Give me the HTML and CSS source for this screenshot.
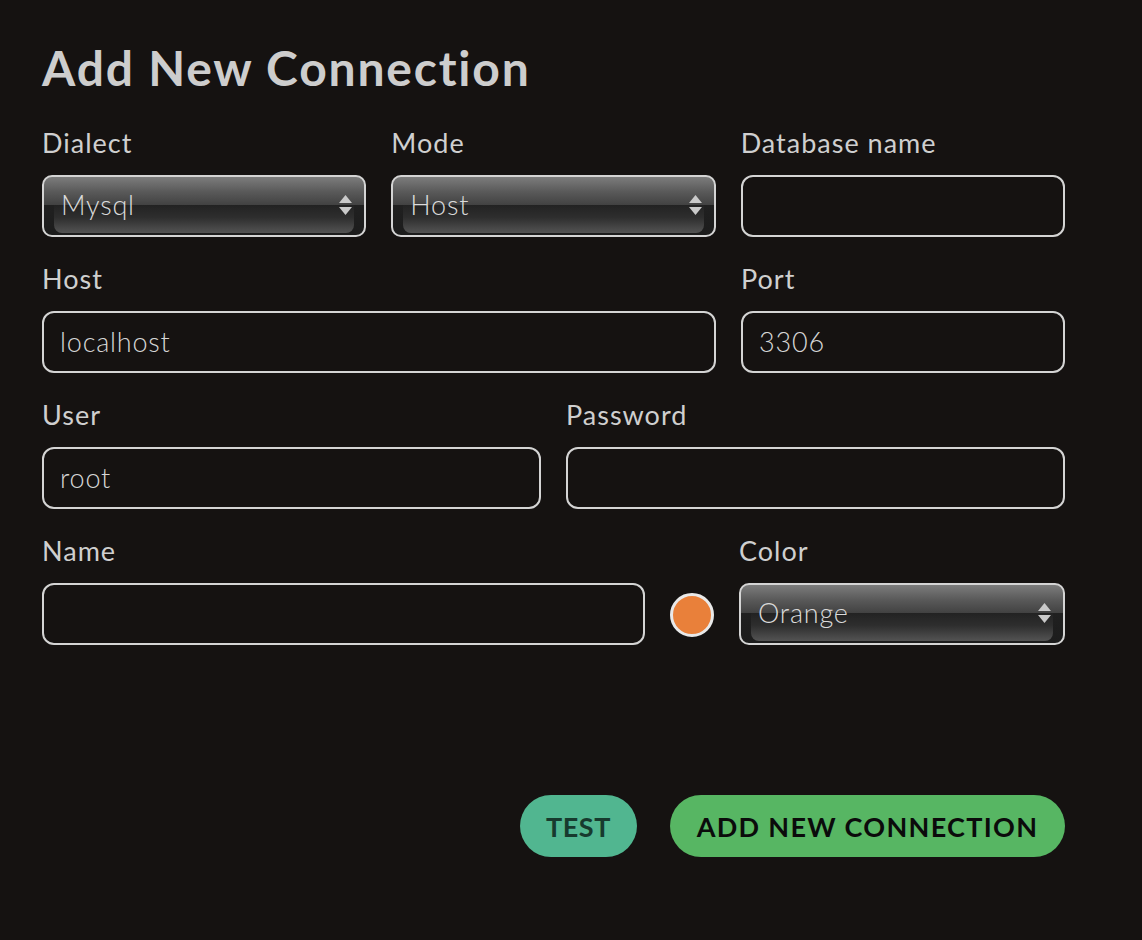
FILE: index.html
```html
<!DOCTYPE html>
<html lang="en">
<head>
<meta charset="utf-8">
<title>Add New Connection</title>
<link rel="stylesheet" href="styles.css">
</head>
<body>
<main class="page">
  <h1 class="title">Add New Connection</h1>

  <div class="row row-3">
    <div class="field">
      <label class="label">Dialect</label>
      <div class="select">
        <span class="select-text">Mysql</span>
        <svg class="arrows" width="13" height="22" viewBox="0 0 13 22"><path d="M6.5 1 L13 9 L0 9 Z M0 13 L13 13 L6.5 21 Z" fill="#c9c9c9"/></svg>
      </div>
    </div>
    <div class="field">
      <label class="label">Mode</label>
      <div class="select">
        <span class="select-text">Host</span>
        <svg class="arrows" width="13" height="22" viewBox="0 0 13 22"><path d="M6.5 1 L13 9 L0 9 Z M0 13 L13 13 L6.5 21 Z" fill="#c9c9c9"/></svg>
      </div>
    </div>
    <div class="field">
      <label class="label">Database name</label>
      <div class="input"></div>
    </div>
  </div>

  <div class="row row-host">
    <div class="field">
      <label class="label">Host</label>
      <div class="input">localhost</div>
    </div>
    <div class="field">
      <label class="label">Port</label>
      <div class="input">3306</div>
    </div>
  </div>

  <div class="row row-2">
    <div class="field">
      <label class="label">User</label>
      <div class="input">root</div>
    </div>
    <div class="field">
      <label class="label">Password</label>
      <div class="input"></div>
    </div>
  </div>

  <div class="row row-name">
    <div class="field">
      <label class="label">Name</label>
      <div class="input"></div>
    </div>
    <div class="swatch-cell"><span class="swatch"></span></div>
    <div class="field">
      <label class="label">Color</label>
      <div class="select">
        <span class="select-text">Orange</span>
        <svg class="arrows" width="13" height="22" viewBox="0 0 13 22"><path d="M6.5 1 L13 9 L0 9 Z M0 13 L13 13 L6.5 21 Z" fill="#c9c9c9"/></svg>
      </div>
    </div>
  </div>

  <div class="actions">
    <button class="btn btn-test">TEST</button>
    <button class="btn btn-add">ADD NEW CONNECTION</button>
  </div>
</main>
</body>
</html>
```

FILE: styles.css
```css
html, body {
  margin: 0;
  padding: 0;
  background: #151211;
}

body {
  font-family: Lato, "Noto Sans", sans-serif;
  color: #cfcfcf;
}

.page {
  width: 1023px;
  padding: 40px 0 0 42px;
}

.title {
  margin: 0 0 32px 0;
  font-size: 48px;
  line-height: 56px;
  font-weight: 700;
  color: #cdcdcd;
  letter-spacing: 1.8px;
}

.row {
  display: grid;
  column-gap: 25px;
  margin-bottom: 27px;
}

.row-3 { grid-template-columns: 1fr 1fr 1fr; }
.row-host { grid-template-columns: 1fr 324px; }
.row-2 { grid-template-columns: 1fr 1fr; }
.row-name { grid-template-columns: 1fr 44px 326px; }

.field {
  display: flex;
  flex-direction: column;
}

.label {
  display: block;
  font-size: 27px;
  letter-spacing: 1px;
  line-height: 30px;
  height: 30px;
  margin-bottom: 17px;
  color: #cfcfcf;
}

.input {
  box-sizing: border-box;
  height: 62px;
  border: 2px solid #d4d4d4;
  border-radius: 12px;
  padding: 0 16px;
  font-size: 27px;
  font-weight: 300;
  letter-spacing: 0.8px;
  line-height: 58px;
  color: #d6d6d6;
}

.select {
  position: relative;
  box-sizing: border-box;
  height: 62px;
  border: 2px solid #d4d4d4;
  border-radius: 10px;
  padding: 0 12px 0 17px;
  display: flex;
  align-items: center;
  justify-content: space-between;
  overflow: hidden;
  background: linear-gradient(to bottom, #7c7c7c 0%, #5a5a5a 25%, #424242 48%, #202020 49%, #1c1c1c 100%);
}

.select::before {
  content: "";
  position: absolute;
  left: 10px;
  right: 10px;
  top: 49%;
  bottom: 2px;
  border-radius: 0 0 8px 8px;
  background: linear-gradient(to bottom, #222222 0%, #2e2e2e 45%, #535353 100%);
}

.select-text {
  position: relative;
  font-size: 27px;
  font-weight: 300;
  letter-spacing: 0.8px;
  line-height: 30px;
  color: #dadada;
  margin-top: -2px;
}

.arrows {
  position: relative;
  margin-top: -2px;
}

.swatch-cell {
  display: flex;
  align-items: flex-end;
  height: 100%;
}

.swatch {
  box-sizing: border-box;
  width: 44px;
  height: 44px;
  border-radius: 50%;
  border: 3px solid #e9e9e9;
  background: #e9803a;
  margin-bottom: 8px;
}

.actions {
  display: flex;
  justify-content: flex-end;
  gap: 33px;
  margin-top: 150px;
}

.btn {
  height: 62px;
  border: none;
  border-radius: 31px;
  font-family: Lato, "Noto Sans", sans-serif;
  font-weight: 700;
  font-size: 27px;
  padding: 0;
  text-align: center;
  cursor: pointer;
}

.btn-test {
  width: 117px;
  letter-spacing: 0.6px;
  background: #51b690;
  color: #173a2e;
}

.btn-add {
  width: 395px;
  letter-spacing: 1.3px;
  background: #57b663;
  color: #0b0b0b;
}
```
